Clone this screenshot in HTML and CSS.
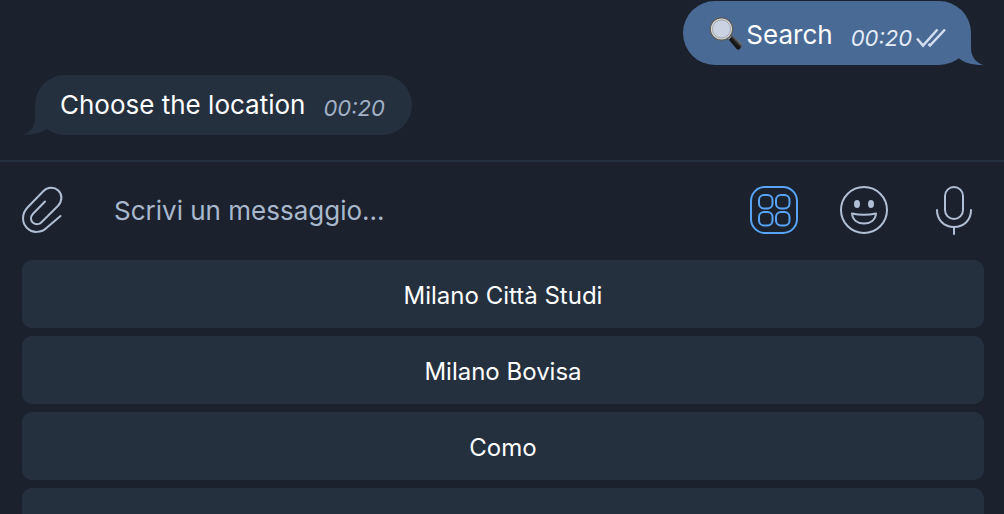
FILE: index.html
```html
<!DOCTYPE html>
<html lang="it">
<head>
<meta charset="utf-8">
<meta name="viewport" content="width=device-width, initial-scale=1">
<title>Chat</title>
<link rel="stylesheet" href="styles.css">
</head>
<body>
<main class="chat">
  <section class="messages">
    <article class="bubble bubble-out">
      <svg class="lens" viewBox="0 0 34 34" aria-hidden="true">
        <defs>
          <linearGradient id="handle" x1="0" y1="1" x2="1" y2="0">
            <stop offset="0" stop-color="#050505"/>
            <stop offset=".5" stop-color="#1a1a1a"/>
            <stop offset=".68" stop-color="#777"/>
            <stop offset="1" stop-color="#111"/>
          </linearGradient>
        </defs>
        <path d="M19.500 20l4 3.500" stroke="#a9a6a2" stroke-width="3"/>
        <path d="M19.800 22.800l3.700-4.300 9 8q1.500 1.300 .2 3l-2 2.600q-1.500 1.500-3 0z" fill="url(#handle)"/>
        <circle cx="12.500" cy="12" r="11" fill="#cbd3e2" stroke="#5d5b58" stroke-width="1.600"/>
        <circle cx="12.500" cy="12" r="10" fill="none" stroke="#d9d6d1" stroke-width="1.200"/>
        <circle cx="12.500" cy="12" r="9" fill="none" stroke="#8f959f" stroke-width=".7"/>
      </svg>
      <span class="text">Search</span>
      <time class="time">00:20</time>
      <svg class="checks" viewBox="0 0 30 20" aria-hidden="true">
        <path d="M1 10.500l6 7L21.500 1.500M12.500 16l1.500 1.500L29 1.500"/>
      </svg>
      <svg class="tail tail-out" viewBox="0 0 30 32" aria-hidden="true"><path d="M17 0V15C17 23 21 29 29 32C18 32 10 30 3 24z"/></svg>
    </article>
    <article class="bubble bubble-in">
      <span class="text">Choose the location</span>
      <time class="time">00:20</time>
      <svg class="tail tail-in" viewBox="0 0 30 32" aria-hidden="true"><path d="M12 0V15C12 23 8 29 0 32C11 32 19 30 26 24z"/></svg>
    </article>
  </section>
  <form class="composer">
    <button class="icon-button" type="button" aria-label="Allega">
      <svg viewBox="0 0 48 52" aria-hidden="true"><path d="M25 17.500L13 29.800C9.800 33.200 10.800 37.300 13.300 39C16 41 19.500 40.200 21.500 38.200L37.800 22C42.500 17 42.500 10.500 38.300 6.500C34 2.500 27.500 3 23.500 7L7.500 23.500C1.800 29.500 1.500 38.300 7 44C12.500 49.500 21.500 49 27 43.500L40.500 32"/></svg>
    </button>
    <input class="field" type="text" placeholder="Scrivi un messaggio..." aria-label="Messaggio">
    <div class="actions">
      <button class="icon-button active" type="button" aria-label="Tastiera del bot">
        <svg viewBox="0 0 48 52" aria-hidden="true"><rect x="1" y="3" width="46" height="46" rx="14"/><rect x="9" y="11" width="13.500" height="13.500" rx="5"/><rect x="26" y="11" width="13.500" height="13.500" rx="5"/><rect x="9" y="28" width="13.500" height="13.500" rx="5"/><rect x="26" y="28" width="13.500" height="13.500" rx="5"/></svg>
      </button>
      <button class="icon-button" type="button" aria-label="Emoji">
        <svg viewBox="0 0 48 52" aria-hidden="true"><circle cx="24" cy="26" r="23"/><ellipse class="solid" cx="17" cy="20" rx="3" ry="4"/><ellipse class="solid" cx="31" cy="20" rx="3" ry="4"/><path d="M12 29.500Q24 32 36 29.500C35.500 36 30.500 39.500 24 39.500S12.500 36 12 29.500z"/></svg>
      </button>
      <button class="icon-button" type="button" aria-label="Messaggio vocale">
        <svg viewBox="0 0 48 52" aria-hidden="true"><rect x="15" y="3" width="18" height="32" rx="9"/><path d="M7 26C7 36 14 43 24 43S41 36 41 26M24 43v7"/></svg>
      </button>
    </div>
  </form>
  <div class="keyboard">
    <button class="key" type="button">Milano Città Studi</button>
    <button class="key" type="button">Milano Bovisa</button>
    <button class="key" type="button">Como</button>
    <button class="key" type="button" aria-label="Altra sede"></button>
  </div>
</main>
</body>
</html>
```

FILE: styles.css
```css
* { box-sizing: border-box; }

body {
  margin: 0;
  background: #1b222d;
  color: #fff;
  font-family: Inter, "Liberation Sans", sans-serif;
  font-size: 26px;
}

.chat {
  display: flex;
  flex-direction: column;
  height: 100vh;
  overflow: hidden;
}

.messages {
  display: flex;
  flex-direction: column;
  flex-shrink: 0;
  gap: 10px;
  padding: 1px 33px 25px 35px;
}

.bubble {
  position: relative;
  display: flex;
  align-items: flex-end;
  border-radius: 32px;
  line-height: 32px;
}

.bubble-out {
  align-self: flex-end;
  padding: 16px 25px 14px 26px;
  background: #4a6a96;
  --bubble: #4a6a96;
}

.bubble-in {
  align-self: flex-start;
  padding: 14px 27px 14px 25px;
  background: #25303f;
  --bubble: #25303f;
}

.lens {
  width: 34px;
  height: 34px;
  margin-right: 3px;
}

.time {
  margin-left: 18px;
  padding-top: 6px;
  font-size: 22px;
  font-style: italic;
  line-height: 26px;
}

.bubble-out .time { color: #e4ecf7; }
.bubble-in .time { color: #a3b1c6; }

.checks {
  width: 30px;
  height: 20px;
  margin: 0 0 3px 4px;
  fill: none;
  stroke: #d3def0;
  stroke-width: 2.5px;
}

.tail {
  position: absolute;
  bottom: 0;
  width: 30px;
  height: 32px;
  fill: var(--bubble);
}

.tail-out { right: -13px; }
.tail-in { left: -12px; }

.composer {
  display: flex;
  flex-shrink: 0;
  align-items: center;
  padding: 22px 26px 24px 20px;
  border-top: 2px solid #25303f;
}

.icon-button {
  width: 48px;
  height: 52px;
  padding: 0;
  border: 0;
  background: none;
  color: #b0bfd4;
}

.icon-button.active { color: #57a4f8; }

.icon-button svg {
  display: block;
  width: 48px;
  height: 52px;
  fill: none;
  stroke: currentColor;
  stroke-width: 2;
  stroke-linecap: round;
  stroke-linejoin: round;
}

.icon-button .solid {
  fill: currentColor;
  stroke: none;
}

.field {
  flex: 1;
  min-width: 0;
  margin-left: 46px;
  padding: 0;
  border: 0;
  outline: 0;
  background: none;
  color: #fff;
  font: inherit;
}

.field::placeholder {
  color: #a9b8cc;
  opacity: 1;
}

.actions {
  display: flex;
  gap: 42px;
}

.keyboard {
  display: flex;
  flex-direction: column;
  flex-shrink: 0;
  gap: 8px;
  padding: 0 20px 8px 22px;
}

.key {
  min-height: 68px;
  padding: 20px 16px 16px;
  border: 0;
  border-radius: 10px;
  background: #25303f;
  color: #fff;
  font-family: inherit;
  font-size: 24px;
  line-height: 32px;
}
```
